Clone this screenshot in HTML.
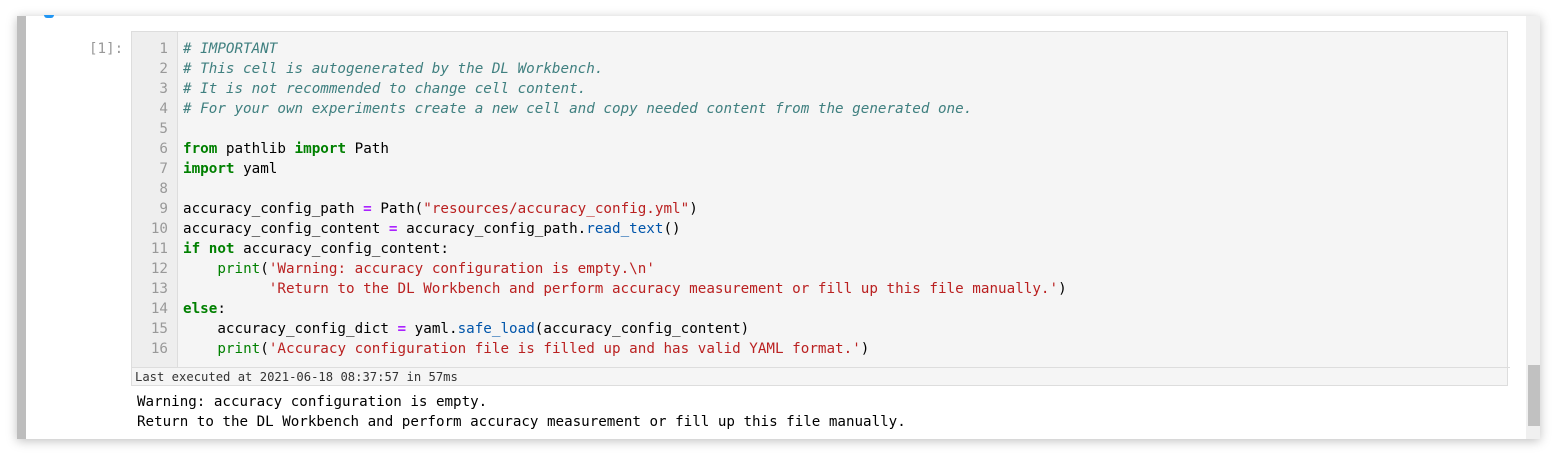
<!DOCTYPE html>
<html><head><meta charset="utf-8"><style>
body{margin:0;width:1564px;height:463px;background:#fff;position:relative;overflow:hidden;font-family:"DejaVu Sans Mono","Liberation Mono",monospace;}
.panel{position:absolute;left:17px;top:16px;width:1523px;height:423px;background:#fff;box-shadow:0 2px 10px rgba(0,0,0,.25);}
.lbar{position:absolute;left:17px;top:16px;width:9px;height:423px;background:#bdbdbd;}
.blue{position:absolute;left:44px;top:15px;width:10px;height:3px;background:#2196f3;border-radius:0 0 3px 3px;}
.track{position:absolute;left:1526px;top:16px;width:14px;height:423px;background:#f0f0f0;}
.thumb{position:absolute;left:1528px;top:365px;width:12px;height:61px;background:#c1c1c1;}
.prompt{position:absolute;left:89px;top:39px;font-size:14.2px;color:#999;line-height:20px;}
.code{position:absolute;left:131px;top:31px;width:1375px;height:353px;background:#f5f5f5;border:1px solid #ddd;}
.gut{position:absolute;left:0;top:0;width:45px;height:335px;background:#eee;border-right:1px solid #ddd;}
.ln{position:absolute;left:0;top:7px;width:36px;text-align:right;font-size:14.25px;line-height:20px;color:#999;white-space:pre;}
.src{position:absolute;left:51px;top:7px;font-size:14.25px;line-height:20px;color:#000;white-space:pre;}
.stat{position:absolute;left:0;top:335px;width:1375px;height:18px;border-top:1px solid #ddd;font-size:12.2px;line-height:18px;padding-left:3px;color:#333;white-space:pre;}
.out{position:absolute;left:137px;top:392px;font-size:14.2px;line-height:20px;color:#000;white-space:pre;}
.c{color:#408080;font-style:italic}.k{color:#008000;font-weight:bold}.s{color:#ba2121}.o{color:#aa22ff;font-weight:bold}.m{color:#0055aa}.b{color:#008000}
</style></head><body>
<div class="panel"></div><div class="lbar"></div><div class="blue"></div><div class="track"></div><div class="thumb"></div>
<div class="prompt">[1]:</div>
<div class="code"><div class="gut"><div class="ln">1
2
3
4
5
6
7
8
9
10
11
12
13
14
15
16</div></div>
<div class="src"><span class="c"># IMPORTANT</span>
<span class="c"># This cell is autogenerated by the DL Workbench.</span>
<span class="c"># It is not recommended to change cell content.</span>
<span class="c"># For your own experiments create a new cell and copy needed content from the generated one.</span>

<span class="k">from</span> pathlib <span class="k">import</span> Path
<span class="k">import</span> yaml

accuracy_config_path <span class="o">=</span> Path(<span class="s">"resources/accuracy_config.yml"</span>)
accuracy_config_content <span class="o">=</span> accuracy_config_path.<span class="m">read_text</span>()
<span class="k">if</span> <span class="k">not</span> accuracy_config_content:
    <span class="b">print</span>(<span class="s">'Warning: accuracy configuration is empty.\n'</span>
          <span class="s">'Return to the DL Workbench and perform accuracy measurement or fill up this file manually.'</span>)
<span class="k">else</span>:
    accuracy_config_dict <span class="o">=</span> yaml.<span class="m">safe_load</span>(accuracy_config_content)
    <span class="b">print</span>(<span class="s">'Accuracy configuration file is filled up and has valid YAML format.'</span>)</div>
<div class="stat">Last executed at 2021-06-18 08:37:57 in 57ms</div>
</div>
<div class="out">Warning: accuracy configuration is empty.
Return to the DL Workbench and perform accuracy measurement or fill up this file manually.</div>
</body></html>
